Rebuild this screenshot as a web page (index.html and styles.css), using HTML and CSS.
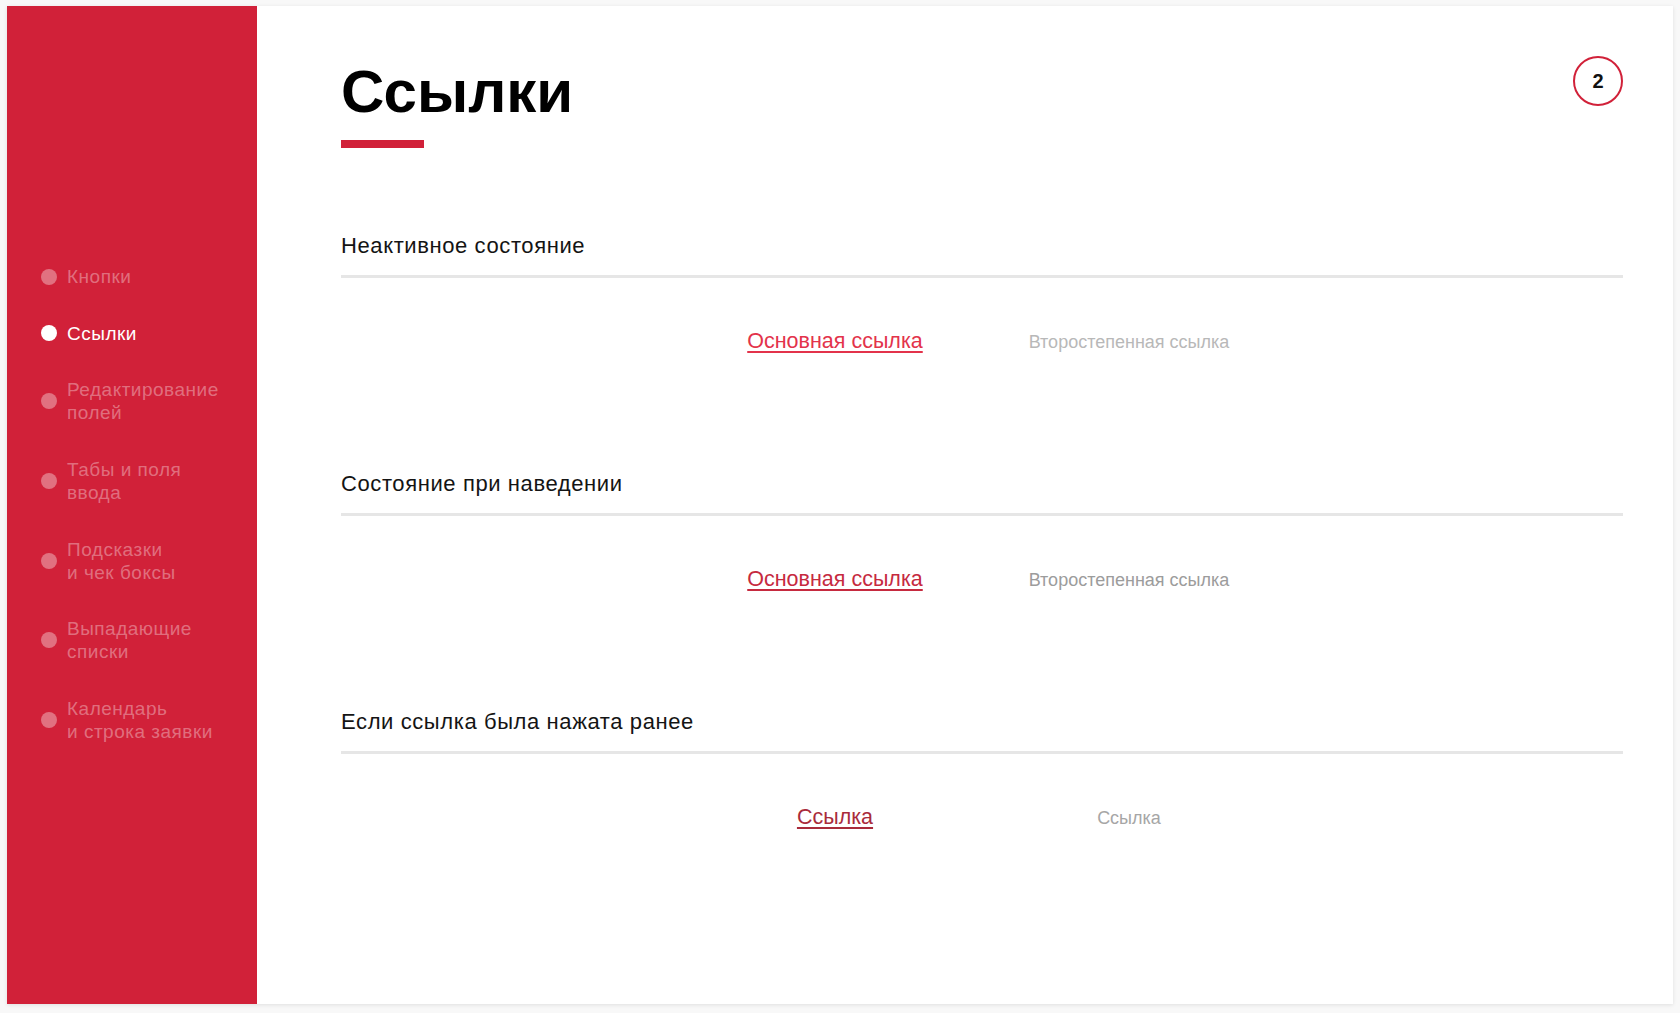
FILE: index.html
```html
<!DOCTYPE html>
<html lang="ru">
<head>
<meta charset="utf-8">
<title>Ссылки</title>
<link rel="stylesheet" href="styles.css">
</head>
<body>
<div class="page">
  <div class="card">
    <aside class="sidebar">
      <nav class="nav">
        <a class="nav-item"><span class="dot"></span><span class="nav-text">Кнопки</span></a>
        <a class="nav-item active"><span class="dot"></span><span class="nav-text">Ссылки</span></a>
        <a class="nav-item"><span class="dot"></span><span class="nav-text">Редактирование<br>полей</span></a>
        <a class="nav-item"><span class="dot"></span><span class="nav-text">Табы и поля<br>ввода</span></a>
        <a class="nav-item"><span class="dot"></span><span class="nav-text">Подсказки<br>и чек боксы</span></a>
        <a class="nav-item"><span class="dot"></span><span class="nav-text">Выпадающие<br>списки</span></a>
        <a class="nav-item"><span class="dot"></span><span class="nav-text">Календарь<br>и строка заявки</span></a>
      </nav>
    </aside>
    <main class="main">
      <div class="badge">2</div>
      <h1 class="title">Ссылки</h1>
      <div class="title-bar"></div>
      <div class="sections">
        <section class="section">
          <h2 class="section-title">Неактивное состояние</h2>
          <div class="links">
            <div class="cell"><a class="link-primary">Основная ссылка</a></div>
            <div class="cell"><a class="link-secondary">Второстепенная ссылка</a></div>
          </div>
        </section>
        <section class="section">
          <h2 class="section-title">Состояние при наведении</h2>
          <div class="links">
            <div class="cell"><a class="link-primary hover">Основная ссылка</a></div>
            <div class="cell"><a class="link-secondary hover">Второстепенная ссылка</a></div>
          </div>
        </section>
        <section class="section">
          <h2 class="section-title">Если ссылка была нажата ранее</h2>
          <div class="links">
            <div class="cell"><a class="link-primary visited">Ссылка</a></div>
            <div class="cell"><a class="link-secondary visited">Ссылка</a></div>
          </div>
        </section>
      </div>
    </main>
  </div>
</div>
</body>
</html>
```
FILE: styles.css
```css
html, body {
  margin: 0;
  padding: 0;
  background: #f8f8f8;
  font-family: "Liberation Sans", Arial, Helvetica, sans-serif;
}
.page {
  padding: 6px 7px 9px 7px;
}
.card {
  display: flex;
  height: 998px;
  background: #ffffff;
  box-shadow: 0 1px 4px rgba(0, 0, 0, 0.10);
}
.sidebar {
  width: 250px;
  flex: none;
  background: #d12139;
  padding-top: 259px;
  box-sizing: border-box;
}
.nav {
  display: flex;
  flex-direction: column;
  gap: 33.7px;
  padding-left: 34px;
}
.nav-item {
  display: flex;
  align-items: center;
  color: rgba(255, 255, 255, 0.36);
  font-size: 19px;
  letter-spacing: 0.5px;
  line-height: 23px;
}
.nav-item .dot {
  width: 16px;
  height: 16px;
  border-radius: 50%;
  background: rgba(255, 255, 255, 0.36);
  flex: none;
  margin-right: 10px;
}
.nav-item.active {
  color: #ffffff;
}
.nav-item.active .dot {
  background: #ffffff;
}
.main {
  flex: 1;
  position: relative;
  padding: 56px 50px 0 84px;
}
.badge {
  position: absolute;
  top: 50px;
  right: 50px;
  width: 46px;
  height: 46px;
  border: 2px solid #d12139;
  border-radius: 50%;
  display: flex;
  align-items: center;
  justify-content: center;
  font-weight: bold;
  font-size: 20px;
  color: #111;
}
.title {
  margin: 0;
  font-size: 60px;
  line-height: 60px;
  font-weight: bold;
  color: #000;
}
.title-bar {
  margin-top: 18px;
  width: 83px;
  height: 8px;
  background: #d12139;
}
.sections {
  margin-top: 85px;
  display: flex;
  flex-direction: column;
  gap: 119px;
}
.section-title {
  margin: 0;
  font-size: 22px;
  letter-spacing: 0.6px;
  line-height: 24px;
  font-weight: normal;
  color: #141414;
  padding-top: 1px;
  padding-bottom: 17px;
  border-bottom: 3px solid #e6e6e6;
}
.links {
  display: flex;
  justify-content: center;
  align-items: baseline;
  height: 22px;
  padding-top: 52px;
}
.cell {
  width: 294px;
  text-align: center;
  line-height: 22px;
}
.link-primary {
  font-size: 21.5px;
  color: #e3334b;
  text-decoration: underline;
  text-underline-offset: 3px;
}
.link-primary.hover {
  color: #c62a3f;
}
.link-primary.visited {
  color: #a92b3b;
}
.link-secondary {
  font-size: 18px;
  color: #b8b8b8;
}
.link-secondary.hover {
  color: #9c9c9c;
}
.link-secondary.visited {
  color: #a6a6a6;
}
```
